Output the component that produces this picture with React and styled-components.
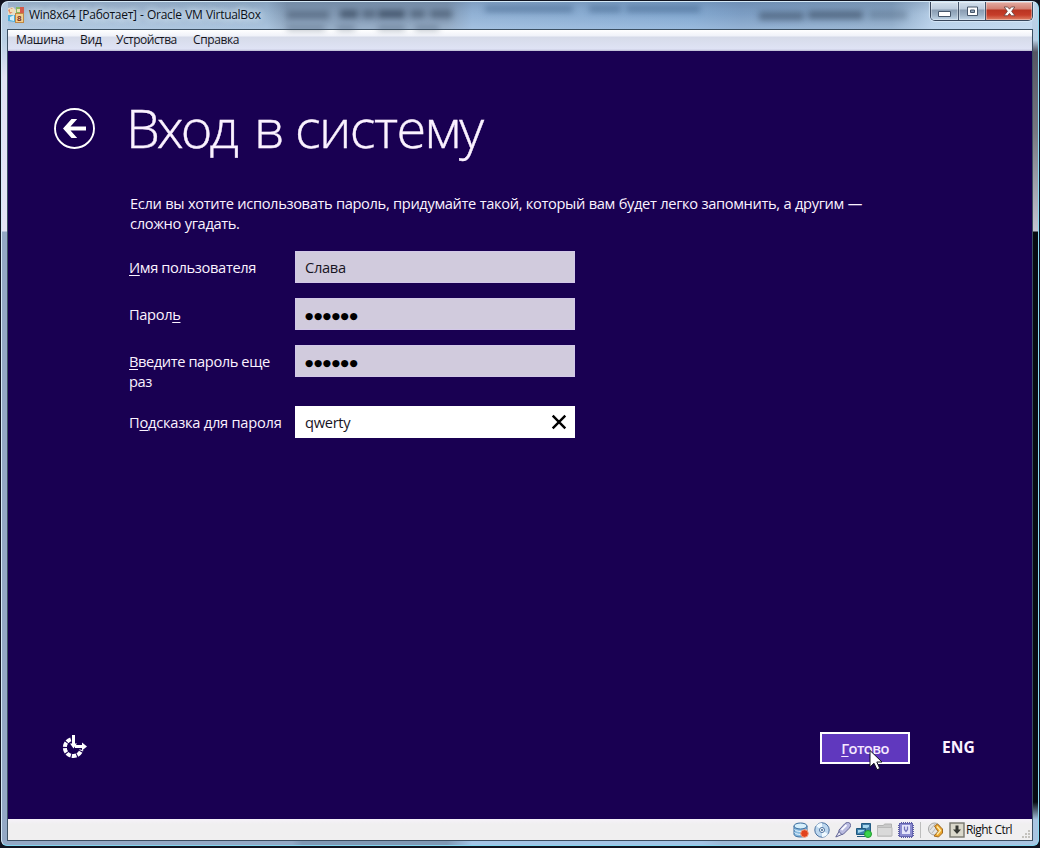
import React from 'react';
import styled, { createGlobalStyle } from 'styled-components';

const Global = createGlobalStyle`
  * { box-sizing: border-box; }
  html, body { margin: 0; background: #10131f; }
  body { width: 1040px; height: 848px; overflow: hidden; font-family: "Open Sans", "Noto Sans", sans-serif; }
`;

const Window = styled.div`
  position: relative;
  width: 1040px;
  height: 848px;
  padding: 1px 1px 2px;
  background: #10131f;
`;
const Glass = styled.div`
  position: relative;
  display: flex;
  flex-direction: column;
  height: 845px;
  padding: 0 5px 4px;
  border: 1px solid #d5e9f7;
  border-right-color: #8edcf4;
  border-bottom-color: #7fd5ef;
  border-radius: 7px 7px 6px 6px;
  overflow: hidden;
  background:
    linear-gradient(90deg, #93a8c5 0 290px, #8098b4 300px 445px, #a3c4e6 470px 700px, #9db9d7 720px, #a9c5e2) bottom / 100% 6px no-repeat,
    linear-gradient(180deg, #b4cadf 0, #b9cfe4 38px, #e1e2f4 75px, #e4e5f5 229px, #93a8c5 230px) left / 6px 100% no-repeat,
    linear-gradient(180deg, #bcd3e9 0, #b9cfe4 38px, #555463 50px, #777780 130px, #c3c4d0 229px, #070b12 230px, #070b12 800px, #a9c5e2 818px) right / 6px 100% no-repeat,
    linear-gradient(180deg, rgba(45,70,105,.16), transparent 12px, rgba(210,232,255,.3) 28px) top / 100% 28px no-repeat,
    linear-gradient(90deg, #a9bfd6 0, #9bb6d1 265px, #8299b3 285px 445px, #91b1d4 470px, #83a8d0 690px, #7c9dc3 740px, #86a3c1 890px, #b5cde6 930px, #bfd5ea) top / 100% 28px no-repeat,
    #93a8c5;
`;
const TitleBar = styled.header`
  position: relative;
  display: flex;
  align-items: flex-start;
  flex: 0 0 27px;
  padding-left: 1px;
`;
const Shade = styled.span`
  position: absolute;
  left: ${p => p.$x}px;
  top: ${p => p.$y}px;
  width: ${p => p.$w}px;
  height: ${p => p.$h || 8}px;
  background: ${p => p.$c || '#3a4b62'};
  opacity: ${p => p.$o || 0.5};
  filter: blur(3px);
`;
const AppIcon = styled.svg`
  position: relative;
  margin-top: 5px;
  flex: none;
`;
const Caption = styled.div`
  position: relative;
  margin: 3px auto 0 5px;
  font: 12px/20px "Open Sans", sans-serif;
  letter-spacing: -0.29px;
  word-spacing: 0.6px;
  white-space: nowrap;
  color: #0b1018;
  text-shadow: 0 0 7px #e7f1fa, 0 0 7px #dbe9f6;
`;
const Controls = styled.div`
  position: relative;
  display: flex;
  height: 19px;
  border: 1px solid #37455a;
  border-top: 0;
  border-radius: 0 0 5px 5px;
  overflow: hidden;
  box-shadow: 0 0 1px 1px rgba(225,240,252,.7);
`;
const Control = styled.button`
  display: flex;
  align-items: flex-end;
  justify-content: center;
  width: ${p => p.$w}px;
  height: 18px;
  padding: 0 0 ${p => p.$lift}px;
  border: 0;
  border-left: ${p => (p.$first ? 0 : '1px solid #45546a')};
  background: ${p => (p.$close
    ? 'linear-gradient(180deg, #e3ada4 0, #d27f72 7px, #b93422 8px, #c63d29 13px, #df8166 18px)'
    : 'linear-gradient(180deg, #d3e0ed 0, #bccbdc 7px, #8a9db3 8px, #9db1c5 13px, #c3d7e9 18px)')};
  box-shadow: inset 0 0 0 1px rgba(255,255,255,.35);
`;
const Client = styled.div`
  display: flex;
  flex-direction: column;
  flex: 1;
  border: 1px solid #3c5063;
`;
const MenuBar = styled.nav`
  display: flex;
  flex: 0 0 21px;
  gap: 16px;
  padding-left: 8px;
  background: linear-gradient(180deg, #fff 0, #f0f2f9 6px, #d6dbe9 7px, #dfe3f5 19px, #b8b6d0 21px);
  font: 12px/20px "Open Sans", sans-serif;
  color: #14141c;
`;
const MenuItem = styled.span`
  width: ${p => p.$w}px;
  letter-spacing: ${p => p.$ls || 0}px;
  white-space: nowrap;
`;
const Screen = styled.main`
  display: flex;
  flex-direction: column;
  flex: 0 0 768px;
  padding: 48px 57px 54px 46px;
  background: #190052;
  color: #fbf2ff;
`;
const Heading = styled.div`
  display: flex;
  align-items: center;
  height: 60px;
  gap: 30px;
`;
const Title = styled.h1`
  display: flex;
  margin: -4px 0 0;
  font: 300 54px/60px "Open Sans", sans-serif;
  -webkit-text-stroke: 0.4px currentColor;
  white-space: nowrap;
`;
const Word = styled.span`
  width: ${p => p.$w}px;
  letter-spacing: ${p => p.$ls}px;
`;
const Intro = styled.p`
  width: 750px;
  margin: 34px 0 0 76px;
  font-size: 14.67px;
  line-height: 20px;
  letter-spacing: -0.36px;
  word-spacing: 0.3px;
  white-space: nowrap;
`;
const Form = styled.form`
  display: grid;
  grid-template-columns: 166px 280px;
  row-gap: 15px;
  margin: 18px 0 0 75px;
`;
const Label = styled.label`
  padding-top: 6px;
  font-size: 14.67px;
  line-height: 20px;
  letter-spacing: ${p => p.$ls || -0.36}px;
  white-space: nowrap;
  height: ${p => (p.$tall ? 46 : 32)}px;
`;
const Key = styled.span`
  text-decoration: underline;
  text-decoration-thickness: 1px;
  text-underline-offset: 2px;
`;
const Field = styled.div`
  display: flex;
  align-items: center;
  justify-content: space-between;
  height: 32px;
  padding: 0 8px 0 10px;
  background: ${p => (p.$active ? '#fff' : '#d1cbdd')};
  box-shadow: ${p => (p.$active ? 'none' : 'inset 0 0 0 1px #d3c8e8')};
  color: #17141f;
  font-size: 14.67px;
  line-height: 20px;
  letter-spacing: -0.3px;
`;
const Dots = styled.span`
  padding-top: 3px;
  font: 9.5px/20px "DejaVu Sans", sans-serif;
  letter-spacing: 0.6px;
  color: #000;
`;
const Footer = styled.footer`
  display: flex;
  align-items: center;
  height: 34px;
  margin-top: auto;
`;
const EaseIcon = styled.svg`
  margin: 0 auto 2px 7px;
`;
const Done = styled.button`
  position: relative;
  width: 90px;
  height: 32px;
  padding: 0;
  border: 2px solid #fff;
  background: #6038be;
  color: #f6e9ff;
  font: 600 14.67px/27px "Open Sans", sans-serif;
  letter-spacing: -0.6px;
`;
const Cursor = styled.svg`
  position: absolute;
  left: 46px;
  top: 15px;
`;
const Lang = styled.div`
  width: 33px;
  margin: 0 0 2px 32px;
  font: 700 15.6px/20px "Open Sans", sans-serif;
  white-space: nowrap;
`;
const StatusBar = styled.div`
  display: flex;
  align-items: center;
  justify-content: flex-end;
  flex: 1;
  gap: 5px;
  padding: 1px 1px 0 0;
  background: linear-gradient(180deg, #f6f2fa, #f0eff0 5px);
  color: #111;
`;
const Divider = styled.i`
  width: 1px;
  height: 16px;
  margin: 0 2px 0 1px;
  background: #bdbdbd;
`;
const HostKey = styled.span`
  width: 47px;
  margin-left: -4px;
  font: 12px/20px "Open Sans", sans-serif;
  letter-spacing: -0.55px;
  white-space: nowrap;
`;

const Ico = ({ children }) => (
  <svg width="16" height="16" viewBox="0 0 16 16" fill="none">{children}</svg>
);

const HardDisk = () => (
  <Ico>
    <path d="M1 4v8c0 2 3 3 6.500 3s6.500-1 6.500-3V4" fill="#86b9df" stroke="#386b9e" />
    <ellipse cx="7.500" cy="4" rx="6.500" ry="3" fill="#d6effb" stroke="#386b9e" />
    <path d="M1.500 7.500c2 2.500 9 2.500 12 0M1.500 10.500c2 2.500 9 2.500 12 0" stroke="#eef8ff" />
    <circle cx="11.500" cy="11.500" r="3.800" fill="#e2421c" stroke="#f49a75" />
  </Ico>
);
const Disc = () => (
  <Ico>
    <circle cx="8" cy="8" r="7.200" fill="#bdd7ee" stroke="#476f9f" />
    <path d="M8 8L2 4a7 7 0 0 1 6-3zM8 8l6 4a7 7 0 0 1-6 3z" fill="#eff9ff" />
    <circle cx="8" cy="8" r="2.500" fill="#fff" stroke="#496f9c" />
    <circle cx="8" cy="8" r="1" fill="#37638f" />
  </Ico>
);
const Usb = () => (
  <Ico>
    <path d="M4 8L9.500 2c2-1.800 4-2 5.300-.8s1.200 3.300-.8 5.300L8.500 12c-2 1.300-4.500 0-4.500-2z" fill="#b9bbe0" stroke="#5f6294" />
    <path d="M6.500 8l5-5" stroke="#f8f8ff" strokeWidth="1.800" />
    <path d="M4 9.500L.8 15l6-2.500z" fill="#e8e8f4" stroke="#5f6294" />
  </Ico>
);
const Network = () => (
  <Ico>
    <path d="M5.500 1.500h9v8h-9z" fill="#447da8" stroke="#225b83" />
    <path d="M7 3h6v2L7 8z" fill="#a6d7ef" />
    <path d="M.5 6.500h9v6h-9zM1 14.500h8" fill="#3d80ac" stroke="#20587d" />
    <path d="M2 8h6v1L2 11z" fill="#a6d7ef" />
    <circle cx="12" cy="12" r="3.500" fill="#39d44b" stroke="#249931" />
  </Ico>
);
const Folder = () => (
  <Ico>
    <path d="M.5 14V3.500h6l1-1.500h7v12z" fill="#c9c9c9" stroke="#b2b2b2" />
    <path d="M.5 14V5.500h14.500V14z" fill="#d9d9d9" stroke="#bababa" />
  </Ico>
);
const Cpu = () => (
  <Ico>
    <path d="M3 .5h11M3 15.500h11M.5 3v11M15.500 3v11" stroke="#5858a5" strokeDasharray="1 1" />
    <rect x="1.500" y="1.500" width="13" height="13" fill="#8b8bd0" stroke="#6262ac" />
    <rect x="4" y="3" width="8" height="9" fill="#e5e5fb" />
    <path d="M6.500 4.500v3L8 9.500l1.500-2v-3" stroke="#7474ba" strokeWidth="1.300" />
  </Ico>
);
const Mouse = () => (
  <Ico>
    <circle cx="6.500" cy="7" r="6" fill="#e3e3e3" stroke="#a4a4a4" />
    <path d="M2 8l5-6M4 11l4-5" stroke="#b9b9b9" />
    <path d="M6.500 4l3-2 5 5v4l-4 4-4.500-1 4-4.500z" fill="#eda72e" stroke="#9f6923" />
    <path d="M9 4.500l3.500 4-3.500 4" stroke="#fff0b0" strokeWidth="1.300" />
  </Ico>
);
const KeyArrow = () => (
  <Ico>
    <rect x="1" y="1" width="14" height="14" fill="#dad8cb" stroke="#77776d" strokeWidth="1.400" />
    <path d="M6.500 3.500h3v4H12l-4 4.500-4-4.500h2.500z" fill="#353732" />
  </Ico>
);
const Grip = styled.svg`
  align-self: flex-end;
  margin-left: 2px;
`;

export default function App() {
  return (
    <>
      <Global />
      <Window>
        <Glass>
          <TitleBar>
            <Shade $x={280} $y={9} $w={42} />
            <Shade $x={333} $y={8} $w={18} $o={0.8} />
            <Shade $x={355} $y={8} $w={14} $o={0.6} />
            <Shade $x={371} $y={8} $w={27} $o={0.85} />
            <Shade $x={403} $y={8} $w={15} $o={0.6} />
            <Shade $x={423} $y={8} $w={22} $o={0.6} />
            <Shade $x={280} $y={24} $w={38} $h={4} />
            <Shade $x={330} $y={24} $w={18} $h={4} />
            <Shade $x={371} $y={24} $w={27} $h={4} />
            <Shade $x={408} $y={24} $w={24} $h={4} />
            <Shade $x={478} $y={4} $w={88} $h={6} $c="#33557d" $o={0.5} />
            <Shade $x={582} $y={4} $w={32} $h={6} $c="#33557d" $o={0.5} />
            <Shade $x={619} $y={4} $w={74} $h={6} $c="#33557d" $o={0.5} />
            <Shade $x={752} $y={10} $w={45} $o={0.6} />
            <Shade $x={801} $y={9} $w={55} $o={0.65} />
            <Shade $x={862} $y={9} $w={38} $o={0.3} />
            <AppIcon width="16" height="17" viewBox="0 0 16 17">
              <path d="M0 1l5-1 3 3v6H0z" fill="#e6dec7" />
              <path d="M0 3l4-2 2 3-4 3z" fill="#e68a5f" />
              <path d="M8 0h6l1 7H8z" fill="#8ab760" />
              <path d="M12 0h4v8h-4z" fill="#d45a4a" />
              <path d="M2 2h4v3H2zM9 2h3v3H9z" fill="#f1dfb8" />
              <path d="M0 8h7v7l-7-1z" fill="#4eaedb" />
              <path d="M2 10l4-2v6l-4-1z" fill="#d1effa" />
              <rect x="7.500" y="6.500" width="8" height="9" fill="#f4cf8d" stroke="#c08844" />
              <text x="9" y="14" fontFamily="Liberation Sans, sans-serif" fontSize="8" fontWeight="700" fill="#772d24">8</text>
            </AppIcon>
            <Caption>Win8x64 [Работает] - Oracle VM VirtualBox</Caption>
            <Controls>
              <Control $w={27} $lift={3} $first aria-label="Свернуть">
                <svg width="13" height="6"><path d="M.5.5h12v5H.5z" fill="#fff" stroke="#46566b" /></svg>
              </Control>
              <Control $w={27} $lift={3} aria-label="Развернуть">
                <svg width="13" height="11"><path d="M1.500 1h10v8.500h-10zM4.500 4v2.500h4V4z" fill="#fff" fillRule="evenodd" stroke="#46566b" /></svg>
              </Control>
              <Control $w={47} $lift={3} $close aria-label="Закрыть">
                <svg width="13" height="11" viewBox="0 0 13 11"><path d="M1.200 1h3.500l1.800 2.200L8.300 1h3.500L8.600 5.300l3.400 4.400H8.400L6.500 7.400 4.600 9.700H1l3.400-4.400z" fill="#fff" stroke="#65403f" strokeWidth=".8" /></svg>
              </Control>
            </Controls>
          </TitleBar>
          <Client>
            <MenuBar>
              <MenuItem $w={48} $ls={-0.33}>Машина</MenuItem>
              <MenuItem $w={20} $ls={-0.25}>Вид</MenuItem>
              <MenuItem $w={61} $ls={-0.52}>Устройства</MenuItem>
              <MenuItem $w={46} $ls={-0.4}>Справка</MenuItem>
            </MenuBar>
            <Screen>
              <Heading>
                <svg width="42" height="42" viewBox="0 0 42 42">
                  <circle cx="20.500" cy="20.500" r="19.500" fill="none" stroke="#fff" strokeWidth="1.900" />
                  <path d="M9 20.500L17.500 11h5.700l-6.700 7.500H32v4H16.500l6.700 7.500h-5.700z" fill="#fff" />
                </svg>
                <Title>
                  <Word $w={128} $ls={-3}>Вход </Word>
                  <Word $w={41} $ls={-1}>в </Word>
                  <Word $w={188} $ls={-1.6}>систему</Word>
                </Title>
              </Heading>
              <Intro>
                Если вы хотите использовать пароль, придумайте такой, который вам будет легко запомнить, а другим —<br />
                сложно угадать.
              </Intro>
              <Form>
                <Label><Key>И</Key>мя пользователя</Label>
                <Field>Слава</Field>
                <Label>Парол<Key>ь</Key></Label>
                <Field><Dots>●●●●●●</Dots></Field>
                <Label $tall $ls={-0.42}><Key>В</Key>ведите пароль еще<br />раз</Label>
                <Field><Dots>●●●●●●</Dots></Field>
                <Label $ls={-0.25}>П<Key>о</Key>дсказка для пароля</Label>
                <Field $active>
                  qwerty
                  <svg width="16" height="16" viewBox="0 0 16 16"><path d="M1.700 1.700l12.600 12.600M14.300 1.700L1.700 14.300" stroke="#000" strokeWidth="2.400" /></svg>
                </Field>
              </Form>
              <Footer>
                <EaseIcon width="28" height="26" viewBox="0 0 28 26">
                  <path d="M9.800 5.400a8.500 8.500 0 1 0 10.700 10.500" fill="none" stroke="#fff" strokeWidth="4" strokeDasharray="4.500 1.100" />
                  <path d="M12.500 1v10M14 12.500h8" fill="none" stroke="#fff" strokeWidth="3" />
                  <path d="M9 9.500h7l-3.500 5zM21 8.500l5 4-5 4z" fill="#fff" />
                </EaseIcon>
                <Done type="button">
                  <Key>Г</Key>отово
                  <Cursor width="15" height="23" viewBox="0 0 15 23">
                    <path d="M2 1.500v16.500l4-3.800 3 6.500 2.800-1.200-3-6.500H14z" fill="#fff" stroke="#15151e" />
                  </Cursor>
                </Done>
                <Lang>ENG</Lang>
              </Footer>
            </Screen>
            <StatusBar>
              <HardDisk /><Disc /><Usb /><Network /><Folder /><Cpu />
              <Divider />
              <Mouse /><KeyArrow />
              <HostKey>Right Ctrl</HostKey>
              <Grip width="11" height="11" viewBox="0 0 11 11">
                <path d="M8 1h2v2H8zM5 4h2v2H5zM8 4h2v2H8zM2 7h2v2H2zM5 7h2v2H5zM8 7h2v2H8z" fill="#c4c2bd" />
              </Grip>
            </StatusBar>
          </Client>
        </Glass>
      </Window>
    </>
  );
}
